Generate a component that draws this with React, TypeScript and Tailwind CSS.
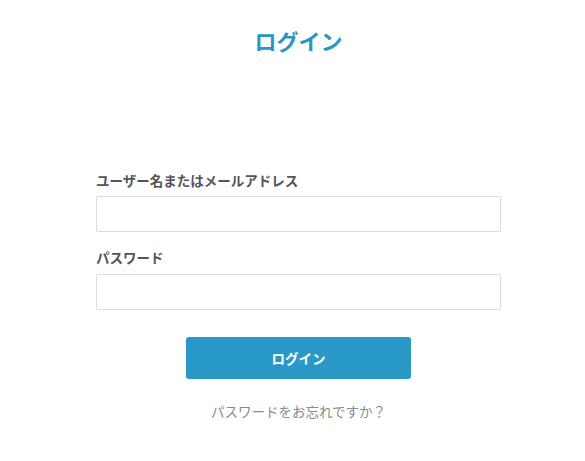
import React from 'react';

const font = { fontFamily: '"Noto Sans CJK JP", "Noto Sans", sans-serif' };

export default function App() {
  return (
    <div className="w-[585px] h-[461px] bg-white" style={font}>
      <div className="flex flex-col pl-[96px] w-[501px]">
        <h1 className="mt-[26px] text-center text-[22px] font-bold leading-[28px] text-[#2a95c5]">ログイン</h1>

        <form className="mt-[116px] flex flex-col" onSubmit={(e) => e.preventDefault()}>
          <label className="text-[13.5px] font-bold leading-[20px] text-[#555]">ユーザー名またはメールアドレス</label>
          <input type="text" className="mt-[6px] h-[36px] w-[405px] rounded-[2px] border border-[#dcdcdc] bg-white px-2 outline-none" />

          <label className="mt-[15px] text-[13.5px] font-bold leading-[20px] text-[#555]">パスワード</label>
          <input type="password" className="mt-[7px] h-[36px] w-[405px] rounded-[2px] border border-[#dcdcdc] bg-white px-2 outline-none" />

          <button type="submit" className="mt-[27px] mx-auto h-[42px] w-[225px] rounded-[3px] bg-[#2898c7] text-[13.5px] font-bold text-white">
            ログイン
          </button>

          <a href="#" className="mt-[22px] text-center text-[13.5px] leading-[20px] text-[#8a8a8a]">パスワードをお忘れですか？</a>
        </form>
      </div>
    </div>
  );
}
